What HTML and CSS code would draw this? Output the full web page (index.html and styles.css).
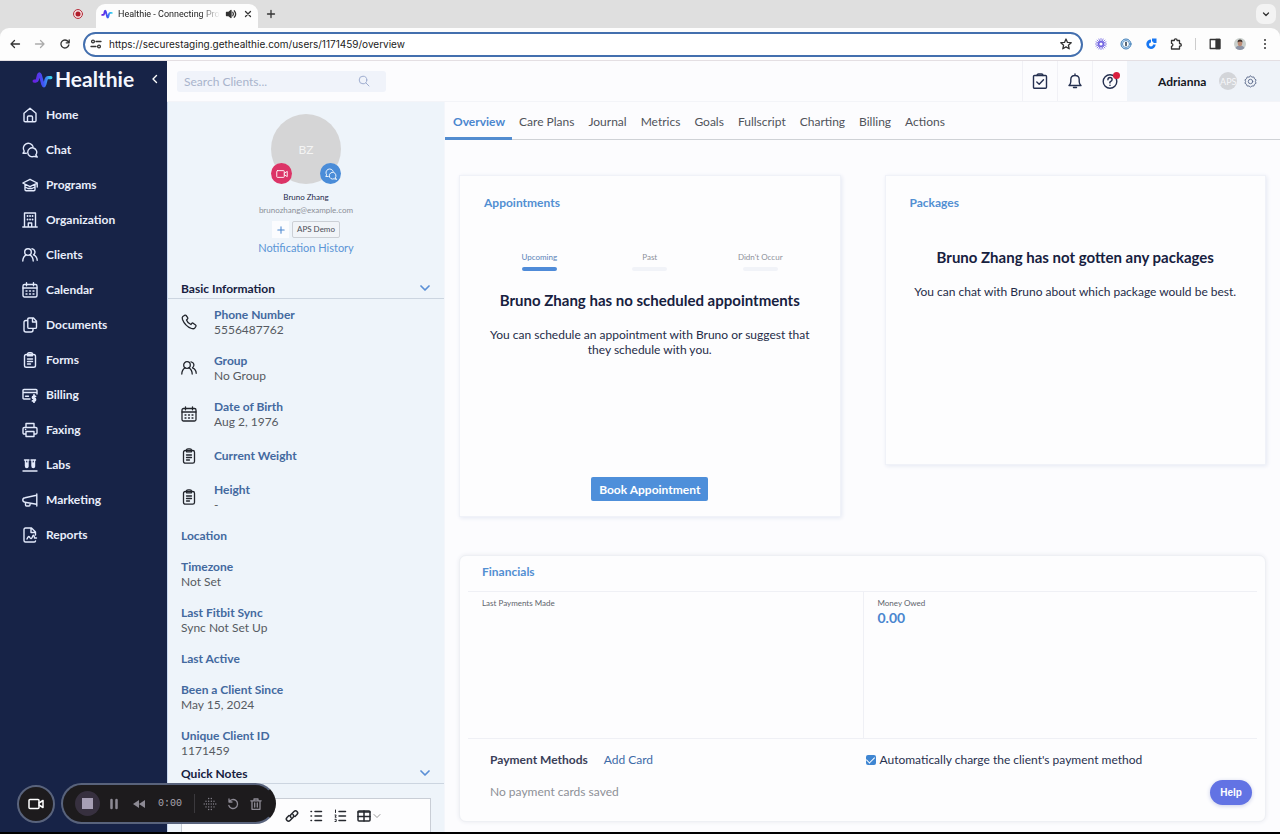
FILE: index.html
```html
<!DOCTYPE html>
<html lang="en">
<head>
<meta charset="utf-8">
<title>Healthie - Connecting Providers</title>
<link rel="stylesheet" href="styles.css">
</head>
<body>
<svg class="defs" aria-hidden="true">
  <defs>
    <linearGradient id="pulse-fill" x1="0" x2="1" y1="0" y2="0">
      <stop offset="0" stop-color="#6a1fe0"/><stop offset=".55" stop-color="#3f55f5"/><stop offset="1" stop-color="#38d6f0"/>
    </linearGradient>
    <symbol id="pulse" viewBox="0 0 20 16"><path d="M2 9.500h1.500q1.300 0 1.800-2l.8-3.500q.9-3 1.900 0l2.300 8.500q1 3 1.900 0l1.200-4.500q.6-1.800 2-1.800H18" fill="none" stroke="url(#pulse-fill)" stroke-width="3" stroke-linecap="round"/></symbol>
    <symbol id="calendar" viewBox="0 0 16 16"><rect x="1" y="2.500" width="14" height="12.500" rx="1.500"/><path d="M1 6h14M4.500 .8v3M11.500 .8v3M4 9h1M7.500 9h1M11 9h1M4 12h1M7.500 12h1M11 12h1"/></symbol>
    <symbol id="people" viewBox="0 0 16 16"><circle cx="6" cy="5" r="3.300"/><path d="M.8 14c0-3 1.500-5 3.400-6.200M11.200 14c0-3-1.500-5-3.400-6.200M10 1.800a3.300 3.300 0 0 1 1.500 6c2 .9 3.700 3 3.700 5.500"/></symbol>
    <symbol id="clipboard" viewBox="0 0 16 16"><rect x="2.500" y="2.500" width="11" height="12.700" rx="1.800"/><path d="M5.500 3.800V2.300q0-1.500 1.500-1.500h2q1.500 0 1.500 1.500v1.500zM5.500 7h5M5.500 9.500h5M5.500 12h3"/></symbol>
    <symbol id="chat" viewBox="0 0 16 16"><path d="M4.300 11.300H1l1.200-2.200A5 5 0 1 1 11 4.500"/><path d="M13.800 13A4.500 4.500 0 1 0 12 14.400l3.200.6z"/></symbol>
    <symbol id="video" viewBox="0 0 16 16"><rect x="1" y="3.500" width="10" height="9" rx="1"/><path d="M11 7l4-2.500v7L11 9"/></symbol>
    <symbol id="chevron" viewBox="0 0 10 8"><path d="M1 2l4 4 4-4"/></symbol>
  </defs>
</svg>

<div class="window">
  <header class="browser">
    <div class="tabstrip">
      <svg class="icon record" viewBox="0 0 12 12"><circle cx="6" cy="6" r="4.500" fill="#f3d9dc" stroke="#b8323f"/><circle cx="6" cy="6" r="2.500" fill="#b01c2a"/></svg>
      <div class="tab">
        <svg class="icon" viewBox="0 0 20 16"><use href="#pulse"/></svg>
        <span class="tab-title">Healthie - Connecting Pro</span>
        <svg class="icon stroke" viewBox="0 0 12 12"><path d="M1.500 4.500h2l2.500-2v7l-2.500-2h-2z" fill="#333"/><path d="M7.800 4.300q1.300 1.700 0 3.400M9.300 2.800q2.700 3.200 0 6.400"/></svg>
        <button class="bare" aria-label="Close tab"><svg class="icon stroke" viewBox="0 0 12 12"><path d="M3.500 3.500l5 5M8.500 3.500l-5 5"/></svg></button>
      </div>
      <button class="bare newtab" aria-label="New tab"><svg class="icon stroke" viewBox="0 0 12 12"><path d="M6 2.500v7M2.500 6h7"/></svg></button>
      <button class="bare tabsearch" aria-label="Search tabs"><svg class="icon stroke" viewBox="0 0 12 12"><path d="M3.500 5 6 7.500 8.500 5"/></svg></button>
    </div>
    <div class="addressbar">
      <div class="history">
        <button class="bare" aria-label="Back"><svg class="icon stroke" viewBox="0 0 12 12"><path d="M10.500 6H2M5.500 2.500 2 6l3.500 3.500"/></svg></button>
        <button class="bare faded" aria-label="Forward"><svg class="icon stroke" viewBox="0 0 12 12"><path d="M1.500 6H10M6.500 2.500 10 6 6.500 9.500"/></svg></button>
        <button class="bare" aria-label="Reload"><svg class="icon stroke" viewBox="0 0 12 12"><path d="M9.800 7A4 4 0 1 1 9.200 3.700L10.200 4.800M10.200 1.800v3H7.200"/></svg></button>
      </div>
      <div class="url">
        <svg class="icon stroke" viewBox="0 0 12 12"><circle cx="3" cy="3.500" r="1.400"/><path d="M6 3.500h5M1 8.500h5"/><circle cx="9" cy="8.500" r="1.400"/></svg>
        <input type="text" aria-label="Address" value="https://securestaging.gethealthie.com/users/1171459/overview">
        <svg class="icon stroke" viewBox="0 0 12 12"><path d="M6 1l1.500 3.400 3.700.3-2.800 2.500.8 3.600L6 8.900l-3.200 1.900.8-3.600L.8 4.700l3.700-.3z"/></svg>
      </div>
      <div class="extensions">
        <svg class="icon" viewBox="0 0 12 12"><path d="M6 .5v11M.5 6h11M2.100 2.100l7.800 7.800M9.900 2.100l-7.800 7.800M3.900 1l4.200 10M8.100 1 3.900 11M1 3.900l10 4.200M1 8.100l10-4.200" stroke="#6d5fe0" stroke-width=".8"/><circle cx="6" cy="6" r="3" fill="#6d5fe0"/><circle cx="6" cy="6" r="1.600" fill="#fff"/></svg>
        <svg class="icon" viewBox="0 0 12 12"><circle cx="6" cy="6" r="5" fill="#dcebf8" stroke="#3b7cb8"/><circle cx="6" cy="6" r="3.500" fill="#fff" stroke="#5c93c4"/><path d="M6 4.500v3" stroke="#234" stroke-width="1.500"/></svg>
        <svg class="icon" viewBox="0 0 12 12"><path d="M6 1.500A4.700 4.700 0 1 0 10.700 6.500H8A2 2 0 1 1 6 4.500z" fill="#1877f2"/><path d="M7 .5h4.500V5H7z" fill="#1877f2"/><circle cx="7.500" cy="4.500" r="1" fill="#fff"/></svg>
        <svg class="icon stroke" viewBox="0 0 12 12"><path d="M1.500 2.500h2.800q0-1.700 1.400-1.700t1.400 1.700h2.400v3q1.800 0 1.800 1.400T9.500 8.200v2.800h-8V8.300q1.400-.2 1.400-1.500T1.500 5.300z"/></svg>
        <span class="separator"></span>
        <svg class="icon stroke" viewBox="0 0 12 12"><rect x="1.200" y="1.500" width="9.600" height="9"/><path d="M7 1.500h3.800v9H7z" fill="#333"/></svg>
        <svg class="icon" viewBox="0 0 12 12"><circle cx="6" cy="6" r="6" fill="#c9cfcc"/><path d="M1.500 10q1-2.500 4.500-2.500t4.500 2.500a6 6 0 0 1-9 0z" fill="#8c93a5"/><ellipse cx="6" cy="5.200" rx="2.200" ry="3" fill="#bd8b75"/><path d="M3.500 4.500q0-3 2.500-3t2.500 3Q6 2.500 3.500 4.500z" fill="#3c2e2a"/></svg>
        <button class="bare" aria-label="Browser menu"><svg class="icon" viewBox="0 0 12 12"><g fill="#333"><circle cx="6" cy="2" r="1"/><circle cx="6" cy="6" r="1"/><circle cx="6" cy="10" r="1"/></g></svg></button>
      </div>
    </div>
  </header>

  <div class="app">
    <aside class="sidebar">
      <div class="brand">
        <svg class="brand-mark" viewBox="0 0 20 16"><use href="#pulse"/></svg>
        <span class="brand-name">Healthie</span>
        <button class="bare collapse" aria-label="Collapse menu"><svg viewBox="0 0 8 12"><path d="M5.500 2.500 2 6l3.500 3.500"/></svg></button>
      </div>
      <nav class="menu">
        <a href="#"><svg viewBox="0 0 16 16"><path d="M2 6.300 8 1.300l6 5V13.500q0 1.200-1.200 1.200H3.200Q2 14.700 2 13.500zM5.500 14.500V10q0-1 1-1h3q1 0 1 1v4.500"/></svg>Home</a>
        <a href="#"><svg><use href="#chat"/></svg>Chat</a>
        <a href="#"><svg viewBox="0 0 16 16"><path d="M8 2.300.8 6 8 9.700 15.200 6zM3 7.500v5q0 1.200 1.200 1.200h7.600q1.200 0 1.200-1.200v-5M15.200 6v4M3.200 10 6 11.500h4L12.800 10"/></svg>Programs</a>
        <a href="#"><svg viewBox="0 0 16 16"><path d="M2.500 15V1h11v14M.8 15h14.400M6.300 15v-4h3.400v4"/><path d="M5.500 4h.1M8 4h.1M10.500 4h.1M5.500 7.500h.1M8 7.500h.1M10.500 7.500h.1" stroke-width="1.800"/></svg>Organization</a>
        <a href="#"><svg><use href="#people"/></svg>Clients</a>
        <a href="#"><svg><use href="#calendar"/></svg>Calendar</a>
        <a href="#"><svg viewBox="0 0 16 16"><path d="M7 1h4.500l3 3.200v6q0 1.200-1.200 1.200H7Q5.800 11.400 5.800 10.200v-8Q5.800 1 7 1zM10.500 1v4h4M5.800 3.500H4Q2 3.500 2 5.500V13q0 2 2 2h5q2 0 2-2v-1.500"/></svg>Documents</a>
        <a href="#"><svg><use href="#clipboard"/></svg>Forms</a>
        <a href="#"><svg viewBox="0 0 16 16"><path d="M8 12H2Q1 12 1 11V3.500q0-1 1-1h12q1 0 1 1V7M1 5.500h14M3.500 9.300h3"/><path d="M12 7.800v7.400M13.500 9.300h-2q-1 0-1 1.100t1 1.100h1q1 0 1 1.200t-1 1.200h-2" stroke-width="1.800"/></svg>Billing</a>
        <a href="#"><svg viewBox="0 0 16 16"><path d="M4 5.500V1.500h8v4M4 12H2.200Q1 12 1 10.800V6.700q0-1.200 1.200-1.200h11.600q1.200 0 1.200 1.200v4.100q0 1.200-1.200 1.200H12M4 9.500h8v5H4zM3.500 7.500h.2"/></svg>Faxing</a>
        <a href="#"><svg viewBox="0 0 16 16"><path d="M1 14h14M2.500 3h4.500M9 3h4.500M3.500 3v6q0 1.500 1.300 1.500T6 9V3M10 3v6q0 1.500 1.300 1.500T12.500 9V3M4.800 6v3M11.300 6v3"/></svg>Labs</a>
        <a href="#"><svg viewBox="0 0 16 16"><path d="M14.800 2v12M14.500 3.300 3 5.800q-2.200.3-2.200 2.200T3 10.200l11.500 2M3.500 10.500V13q0 1 1 1H7q1 0 1-1v-1.800"/></svg>Marketing</a>
        <a href="#"><svg viewBox="0 0 16 16"><path d="M13.500 14q-.3 1-1.500 1H3.500Q2 15 2 13.500v-11Q2 1 3.500 1h6L13.500 5v3M9 1v4.500h4.500M5 12q1.500-4 2.800-1.500t2.700-.8 2 1.300h2"/></svg>Reports</a>
      </nav>
    </aside>

    <div class="page">
      <div class="topbar">
        <form class="search">
          <input type="search" aria-label="Search Clients" placeholder="Search Clients...">
          <svg viewBox="0 0 12 12"><circle cx="5" cy="5" r="3.800"/><path d="M8 8l3 3"/></svg>
        </form>
        <div class="tools">
          <button class="bare tool" aria-label="Tasks"><svg viewBox="0 0 16 16"><rect x="1.500" y="2.500" width="13" height="12.700" rx="1"/><path d="M5 2.500q0-1.500 1.500-1.500h3Q11 1 11 2.500M4.800 9l2.400 2.300 4.300-4.600"/></svg></button>
          <button class="bare tool" aria-label="Notifications"><svg viewBox="0 0 16 16"><path d="M2 12.500q1.800-1.500 1.800-4V6.500Q3.800 2.500 8 2.500t4.200 4v2q0 2.500 1.800 4zM8 2.300V1M6.500 14.500h3"/></svg></button>
          <button class="bare tool" aria-label="Help center"><svg viewBox="0 0 16 16"><circle cx="8" cy="8.500" r="6.800"/><path d="M5.900 6.800q0-2.300 2.100-2.300t2.100 2q0 1.200-1.300 1.900T8 10M8 12.200v.2"/></svg><span class="alert"></span></button>
        </div>
        <div class="user">
          <span>Adrianna</span>
          <span class="user-avatar">APS</span>
          <button class="bare gear" aria-label="Settings"><svg viewBox="0 0 14 14"><path d="M7 1l1.600 1.300 2-.2.7 2L13 5.200 12.300 7l.7 1.900-1.700 1.100-.7 1.900-2-.1L7 13l-1.600-1.200-2 .1L2.700 10 1 8.900 1.700 7 1 5.200l1.700-1.100.7-2 2 .2z"/><circle cx="7" cy="7" r="2.400"/></svg></button>
        </div>
      </div>

      <div class="columns">
        <section class="client">
          <div class="profile">
            <div class="portrait">BZ
              <button class="bare badge call" aria-label="Start video call"><svg><use href="#video"/></svg></button>
              <button class="bare badge message" aria-label="Send message"><svg><use href="#chat"/></svg></button>
            </div>
            <div class="name">Bruno Zhang</div>
            <div class="email">brunozhang@example.com</div>
            <div class="tags"><button class="bare add" aria-label="Add tag"><svg viewBox="0 0 10 10"><path d="M5 1v8M1 5h8"/></svg></button><span class="tag">APS Demo</span></div>
            <a class="history-link" href="#">Notification History</a>
          </div>
          <h2 class="section-title">Basic Information <svg><use href="#chevron"/></svg></h2>
          <dl class="fields">
            <div class="field"><svg viewBox="0 0 16 16"><path d="M3.800 1.200 1.800 2.500Q.8 3.300 1.500 5.500 4 12 10.500 14.500q2.300.7 3.200-.4l1.200-1.800q.4-.8-.3-1.300l-2.500-1.800q-.8-.4-1.300.2l-.9 1.100Q6.500 9 5.500 6l1-1q.6-.6.2-1.300L5.100 1.500q-.5-.7-1.300-.3z"/></svg><div><dt>Phone Number</dt><dd>5556487762</dd></div></div>
            <div class="field"><svg><use href="#people"/></svg><div><dt>Group</dt><dd>No Group</dd></div></div>
            <div class="field"><svg><use href="#calendar"/></svg><div><dt>Date of Birth</dt><dd>Aug 2, 1976</dd></div></div>
            <div class="field short"><svg><use href="#clipboard"/></svg><div><dt>Current Weight</dt></div></div>
            <div class="field"><svg><use href="#clipboard"/></svg><div><dt>Height</dt><dd>-</dd></div></div>
            <div><dt>Location</dt></div>
            <div><dt>Timezone</dt><dd>Not Set</dd></div>
            <div><dt>Last Fitbit Sync</dt><dd>Sync Not Set Up</dd></div>
            <div><dt>Last Active</dt></div>
            <div><dt>Been a Client Since</dt><dd>May 15, 2024</dd></div>
            <div><dt>Unique Client ID</dt><dd>1171459</dd></div>
          </dl>
          <h2 class="section-title">Quick Notes <svg><use href="#chevron"/></svg></h2>
          <div class="editor">
            <div class="editor-tools">
              <button class="bare" aria-label="Link"><svg viewBox="0 0 14 14"><path d="M6 8.500q-1.500-1.500 0-3l3-3q1.500-1.500 3 0t0 3L10 7.500M8 5.500q1.500 1.500 0 3l-3 3q-1.500 1.500-3 0t0-3L4 6.500"/></svg></button>
              <button class="bare" aria-label="Bulleted list"><svg viewBox="0 0 14 14"><path d="M6 2.500h6.500M6 7h6.500M6 11.500h6.500M2 2.500h.5M2 7h.5M2 11.500h.5"/></svg></button>
              <button class="bare" aria-label="Numbered list"><svg viewBox="0 0 14 14"><path d="M6 2.500h6.500M6 7h6.500M6 11.500h6.500"/><path d="M2.500 1v2.500M2 6h1.200L2 8.200h1.200M2 10.300h1.200v2.200H2" stroke-width="1"/></svg></button>
              <button class="bare table" aria-label="Table"><svg viewBox="0 0 14 14"><rect x="1" y="2" width="12" height="10" rx="1"/><path d="M1 3h12M1 7.500h12M7 2v10"/></svg><svg class="drop"><use href="#chevron"/></svg></button>
            </div>
          </div>
        </section>

        <main class="main">
          <nav class="tabs">
            <a class="active" href="#">Overview</a><a href="#">Care Plans</a><a href="#">Journal</a><a href="#">Metrics</a><a href="#">Goals</a><a href="#">Fullscript</a><a href="#">Charting</a><a href="#">Billing</a><a href="#">Actions</a>
          </nav>
          <div class="content">
            <div class="cards">
              <section class="card appointments">
                <h2>Appointments</h2>
                <div class="filters"><button class="bare on">Upcoming</button><button class="bare">Past</button><button class="bare">Didn't Occur</button></div>
                <h3>Bruno Zhang has no scheduled appointments</h3>
                <p>You can schedule an appointment with Bruno or suggest that they schedule with you.</p>
                <button class="bare book">Book Appointment</button>
              </section>
              <section class="card packages">
                <h2>Packages</h2>
                <h3>Bruno Zhang has not gotten any packages</h3>
                <p>You can chat with Bruno about which package would be best.</p>
              </section>
            </div>
            <section class="financials">
              <h2>Financials</h2>
              <div class="totals">
                <div><span class="caption">Last Payments Made</span></div>
                <div><span class="caption">Money Owed</span><strong>0.00</strong></div>
              </div>
              <div class="payment">
                <div><h3>Payment Methods <a href="#">Add Card</a></h3><p>No payment cards saved</p></div>
                <label><input type="checkbox" checked>Automatically charge the client's payment method</label>
              </div>
            </section>
          </div>
        </main>
      </div>
    </div>
  </div>

  <div class="recorder">
    <button class="bare camera" aria-label="Camera"><svg><use href="#video"/></svg></button>
    <div class="pill">
      <button class="bare stop" aria-label="Stop"><span></span></button>
      <button class="bare" aria-label="Pause"><svg viewBox="0 0 12 12"><path d="M3.500 2v8M8.500 2v8" stroke-width="2.500"/></svg></button>
      <button class="bare" aria-label="Rewind"><svg viewBox="0 0 12 12"><path d="M6 2v8L0 6zM12 2v8L6 6z" fill="#8d8a94" stroke="none"/></svg></button>
      <span class="time">0:00</span>
      <span class="divider"></span>
      <button class="bare" aria-label="Blur"><svg viewBox="0 0 12 12"><path d="M4.700.5v.1M7.300.5v.1M2 3.200v.1M4.700 3.200v.1M7.300 3.200v.1M10 3.200v.1M.2 6v.1M2.500 6v.1M4.800 6v.1M7.200 6v.1M9.500 6v.1M11.800 6v.1M2 8.800v.1M4.700 8.800v.1M7.300 8.800v.1M10 8.800v.1M4.700 11.500v.1M7.300 11.500v.1"/></svg></button>
      <button class="bare" aria-label="Restart"><svg viewBox="0 0 12 12"><path d="M2 4h3M2 1v3A4.500 4.500 0 1 1 1.800 7.500"/></svg></button>
      <button class="bare" aria-label="Delete"><svg viewBox="0 0 12 12"><path d="M.8 2.800h10.400M4 2.500V1h4v1.500M2 3v8.300h8V3M4.700 5v4M7.300 5v4"/></svg></button>
    </div>
  </div>
  <button class="bare help">Help</button>
</div>
</body>
</html>
```
FILE: styles.css
```css
* { box-sizing: border-box; }
body { margin: 0; font-family: Lato, "Noto Sans", sans-serif; font-size: 12px; line-height: 15px; color: #4a4d55; }
h2, h3, p, dl, dd { margin: 0; }
a { color: inherit; text-decoration: none; }
svg { display: block; flex: none; overflow: visible; fill: none; stroke-linecap: round; stroke-linejoin: round; }
.defs { position: absolute; width: 0; height: 0; }
.bare { appearance: none; border: 0; background: none; padding: 0; margin: 0; font: inherit; color: inherit; cursor: pointer; display: flex; align-items: center; justify-content: center; }
.icon { width: 12px; height: 12px; }
.stroke { stroke: #333; stroke-width: 1.3; }

.window { position: relative; display: flex; flex-direction: column; height: 100vh; min-height: 640px; overflow: hidden; border-bottom: 2px solid #000; }

/* Browser chrome */
.browser { flex: none; background: #dfdfdf; border-bottom: 1px solid #e4dfe3; font-family: Inter, "Liberation Sans", sans-serif; color: #222; }
.tabstrip { display: flex; align-items: center; height: 28px; padding: 0 4px 0 72px; }
.tab { display: flex; align-items: center; gap: 5px; align-self: flex-end; width: 162px; height: 24px; margin-left: 12px; padding: 0 5px 4px; border-radius: 9px 9px 0 0; background: #fdfdfd; }
.tab-title { flex: 1; white-space: nowrap; font-family: Roboto, "Liberation Sans", sans-serif; font-size: 9px; mask-image: linear-gradient(90deg, #000 80%, transparent); }
.newtab { margin-left: 7px; }
.tabsearch { width: 20px; height: 20px; margin-left: auto; border-radius: 7px; background: #f3f3f3; }
.addressbar { display: flex; align-items: center; gap: 12px; height: 32px; padding: 0 9px; border-radius: 9px 9px 0 0; background: #fdfdfd; }
.history { display: flex; gap: 13px; }
.faded { opacity: .4; }
.url { display: flex; flex: 1; align-items: center; gap: 7px; height: 25px; padding: 0 9px 0 5px; border: 2px solid #436fae; border-radius: 13px; background: #fff; }
.url input { flex: 1; min-width: 0; border: 0; outline: 0; padding: 0; background: none; font: inherit; font-size: 10px; color: #222; }
.extensions { display: flex; align-items: center; gap: 13px; }
.extensions .separator { width: 1px; height: 12px; background: #ccc; }

/* Sidebar */
.app { display: flex; flex: 1; min-height: 0; }
.sidebar { flex: none; width: 167px; background: #172347; color: #e9eefb; }
.brand { display: flex; align-items: center; height: 36px; padding: 0 8px 0 32px; }
.brand-mark { width: 21px; height: 17px; }
.brand-name { flex: 1; margin-left: 2px; font-size: 21px; line-height: 24px; font-weight: 700; color: #f4f7ff; }
.collapse svg { width: 8px; height: 12px; stroke: #fff; stroke-width: 1.4; }
.menu { display: flex; flex-direction: column; }
.menu a { display: flex; align-items: center; gap: 8px; height: 35px; padding-left: 22px; font-weight: 700; }
.menu svg { width: 16px; height: 16px; stroke: #e3eafc; stroke-width: 1.4; }

/* Top bar */
.page { display: flex; flex: 1; flex-direction: column; min-width: 0; background: #fcfcfe; }
.topbar { display: flex; flex: none; height: 41px; border-bottom: 1px solid #f3f4f8; }
.search { display: flex; align-items: center; align-self: center; width: 209px; height: 21px; margin-left: 10px; padding: 0 16px 0 7px; border-radius: 3px; background: #f0f3fa; }
.search input { flex: 1; min-width: 0; padding: 0; border: 0; outline: 0; background: none; font: inherit; }
.search input::placeholder { color: #a9b3cc; }
.search svg { width: 12px; height: 12px; stroke: #9fadd0; }
.tools { display: flex; margin-left: auto; }
.tool { position: relative; width: 35px; border-left: 1px solid #f1f1f6; }
.tool svg { width: 16px; height: 16px; stroke: #253050; stroke-width: 1.4; }
.alert { position: absolute; top: 11px; right: 7px; width: 7px; height: 7px; border-radius: 50%; background: #d81f3f; }
.user { display: flex; align-items: center; gap: 7px; width: 153px; padding-left: 31px; background: #eff3f9; color: #15171f; font-weight: 700; }
.user span:first-child { flex: none; margin-right: 6px; }
.user-avatar { display: flex; align-items: center; justify-content: center; width: 18px; height: 18px; border-radius: 50%; background: #d3d5d9; color: #f6f7f9; font-size: 9px; font-weight: 400; }
.gear svg { width: 13px; height: 13px; stroke: #5d6b8d; }

/* Client panel */
.columns { display: flex; flex: 1; min-height: 0; }
.client { display: flex; flex-direction: column; flex: none; width: 278px; border-left: 1px solid #c9d9f0; border-right: 1px solid #f4f6fb; background: #eef4fa; overflow: hidden; }
.profile { display: flex; flex-direction: column; align-items: center; padding: 12px 0 22px; }
.portrait { position: relative; display: flex; align-items: center; justify-content: center; width: 70px; height: 70px; border-radius: 50%; background: #d5d5d6; color: #f4f4f4; }
.badge { position: absolute; bottom: 0; width: 21px; height: 21px; border-radius: 50%; }
.badge svg { width: 12px; height: 12px; stroke: #fff; stroke-width: 1.2; }
.call { left: 0; background: #dc3467; }
.message { right: 0; background: #4a8cd8; }
.name { margin-top: 7px; font-size: 8px; line-height: 12px; color: #1f2a4a; }
.email { font-size: 8px; line-height: 14px; color: #8b8f97; }
.tags { display: flex; align-items: center; gap: 3px; margin-top: 4px; }
.tags .add { width: 17px; height: 17px; background: #fbfcfe; }
.tags .add svg { width: 8px; height: 8px; stroke: #4a86cf; stroke-width: 1.3; }
.tag { height: 17px; padding: 0 4px; border: 1px solid #ccd0d6; border-radius: 2px; background: #f1f4f8; font-size: 8px; line-height: 15px; }
.history-link { margin-top: 2px; font-size: 11px; line-height: 16px; color: #5b95d6; }
.section-title { display: flex; flex: none; align-items: center; justify-content: space-between; height: 21px; padding: 0 14px 0 13px; border-bottom: 1px solid #ccd5e0; font-size: 12px; font-weight: 700; color: #17213f; }
.section-title svg { width: 10px; height: 8px; stroke: #5a8fd6; stroke-width: 1.7; }
.fields { display: flex; flex-direction: column; gap: 16px; flex: none; padding: 8px 13px 5px; }
.fields dt { font-weight: 700; color: #43699f; }
.fields dd { color: #565a61; }
.field { display: flex; align-items: center; gap: 17px; }
.field svg { width: 16px; height: 16px; stroke: #22252c; stroke-width: 1.3; }
.short { height: 21px; }
.editor { flex: 1; min-height: 35px; margin: 14px 13px 0; border: 1px solid #c9ced6; border-bottom: 0; background: #fdfdfe; }
.editor-tools { display: flex; gap: 10px; height: 34px; align-items: center; padding-left: 103px; border-bottom: 1px solid #d5d9df; }
.editor svg { width: 14px; height: 14px; stroke: #25282e; stroke-width: 1.5; }
.editor .drop { width: 8px; height: 6px; margin-left: 2px; stroke: #777; stroke-width: 1; }

/* Main content */
.main { display: flex; flex-direction: column; flex: 1; min-width: 0; }
.tabs { display: flex; flex: none; height: 38px; border-bottom: 1px solid #cfd2d6; }
.tabs a { display: flex; align-items: center; height: 38px; padding: 3px 7px 0; border-bottom: 3px solid transparent; color: #50535a; }
.tabs .active { padding-left: 8px; border-color: #528cd0; color: #4a86cf; font-weight: 700; }
.content { display: flex; flex: 1; flex-direction: column; padding: 35px 14px 10px; min-height: 0; }
.cards { display: grid; grid-template-columns: 1fr 1fr; gap: 44px; align-items: start; }
.card { display: flex; flex-direction: column; padding: 19px 24px 15px; border: 1px solid #f0f2f8; box-shadow: 1px 1px 4px #e5e8f3; background: #fdfdfe; }
.appointments { min-height: 342px; }
.packages { min-height: 290px; }
.content h2 { font-size: 12px; line-height: 16px; font-weight: 700; color: #528fd2; }
.card h3 { font-size: 15px; line-height: 18px; text-align: center; color: #17213f; }
.card p { margin-top: 18px; text-align: center; color: #252c48; }
.filters { display: grid; grid-template-columns: repeat(3, 1fr); margin: 40px 0 20px; }
.filters button { flex-direction: column; gap: 4px; font-size: 8px; line-height: 12px; color: #8d919a; }
.filters button::after { content: ""; width: 35px; height: 4px; border-radius: 2px; background: #f1f3f8; }
.filters .on { color: #5b83b8; }
.filters .on::after { background: #4f8bd8; }
.book { align-self: center; margin-top: auto; height: 24px; padding: 0 8px; border-radius: 2px; background: #4e8fda; color: #fff; font-weight: 700; }
.packages h3 { margin-top: 37px; }
.financials { display: flex; flex: 1; flex-direction: column; margin-top: 38px; padding: 8px 8px 0; border: 1px solid #eef0f4; border-radius: 7px; box-shadow: 0 0 4px #e8eaf0; background: #fdfdfe; }
.financials h2 { height: 27px; padding-left: 14px; }
.totals { display: grid; grid-template-columns: 1fr 1fr; height: 148px; border: solid #eff0f5; border-width: 1px 0; }
.totals div { display: flex; flex-direction: column; padding: 5px 14px; }
.totals div + div { border-left: 1px solid #eff0f5; }
.caption { font-size: 8px; line-height: 12px; color: #60646c; }
.totals strong { font-size: 14px; line-height: 18px; color: #4a86cf; }
.payment { display: grid; grid-template-columns: 1fr 1fr; align-items: start; padding-top: 13px; }
.payment > div { padding-left: 22px; }
.payment h3 { display: flex; gap: 16px; font-size: 12px; line-height: 16px; color: #3a4058; }
.payment h3 a { font-weight: 400; color: #3d6ba8; }
.payment p { margin-top: 16px; color: #8d9097; }
.payment label { display: flex; align-items: center; gap: 4px; padding-left: 3px; line-height: 16px; color: #28304e; }
.payment input { appearance: none; width: 10px; height: 10px; margin: 0; border-radius: 2px; background: #3f86d2; display: flex; justify-content: center; }
.payment input::after { content: ""; width: 4px; height: 7px; border: solid #fff; border-width: 0 1px 1px 0; transform: rotate(45deg); }

/* Floating controls */
.recorder { position: absolute; left: 17px; bottom: 8px; display: flex; align-items: center; gap: 6px; }
.recorder svg { width: 12px; height: 12px; stroke: #8d8a94; stroke-width: 1.3; }
.recorder .camera svg { width: 16px; height: 16px; stroke: #fff; stroke-width: 1.5; }
.camera { width: 38px; height: 38px; border: 2px solid #59637c; border-radius: 50%; background: #1d1b1d; }
.pill { display: flex; align-items: center; gap: 13px; width: 215px; height: 41px; padding-left: 12px; border: 2px solid #59637c; border-right-color: #1d1b1d; border-radius: 21px; background: #1d1b1d; }
.stop { width: 25px; height: 25px; margin-right: -5px; border-radius: 50%; background: #37303f; }
.stop span { width: 11px; height: 11px; background: #a79fb5; }
.time { font: 10px/12px "Liberation Mono", monospace; color: #aaa6b0; }
.divider { width: 1px; height: 19px; margin: 0 -4px 0 -1px; background: #3b393d; }
.pill button:nth-last-child(-n+2) { margin-left: -2px; }
.help { position: absolute; right: 28px; bottom: 27px; width: 42px; height: 25px; border-radius: 13px; background: #6273e4; color: #fff; font: bold 10px/12px "Liberation Sans", sans-serif; box-shadow: 0 1px 4px #c8cce8; }
```
